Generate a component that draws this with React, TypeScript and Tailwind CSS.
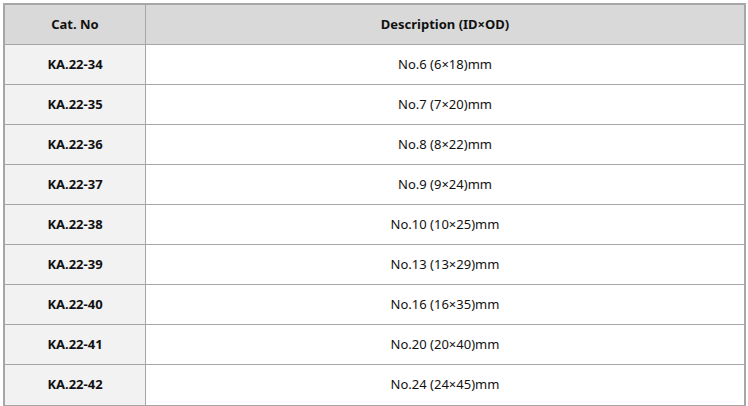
const rows = [
  ['KA.22-34', 'No.6 (6×18)mm'],
  ['KA.22-35', 'No.7 (7×20)mm'],
  ['KA.22-36', 'No.8 (8×22)mm'],
  ['KA.22-37', 'No.9 (9×24)mm'],
  ['KA.22-38', 'No.10 (10×25)mm'],
  ['KA.22-39', 'No.13 (13×29)mm'],
  ['KA.22-40', 'No.16 (16×35)mm'],
  ['KA.22-41', 'No.20 (20×40)mm'],
  ['KA.22-42', 'No.24 (24×45)mm'],
];

export default function App() {
  return (
    <div className="w-[748px] h-[406px] bg-white pt-[3px] pl-[3px] text-[13px] text-[#111]" style={{ fontFamily: '"Noto Sans", "Noto Sans CJK KR", sans-serif' }}>
      <div className="w-[743px] border-2 border-[#a6a6a6]">
        <div className="flex h-[40px] border-b border-[#a6a6a6] bg-[#d9d9d9] font-bold">
          <div className="w-[141px] border-r border-[#a6a6a6] flex items-center justify-center">Cat. No</div>
          <div className="flex-1 flex items-center justify-center">Description (ID×OD)</div>
        </div>
        {rows.map(([cat, desc], i) => (
          <div key={cat} className={`flex h-[40px] ${i < rows.length - 1 ? 'border-b border-[#a6a6a6]' : 'h-[39px]'}`}>
            <div className="w-[141px] border-r border-[#a6a6a6] bg-[#f2f2f2] font-bold flex items-center justify-center">{cat}</div>
            <div className="flex-1 flex items-center justify-center">{desc}</div>
          </div>
        ))}
      </div>
    </div>
  );
}
